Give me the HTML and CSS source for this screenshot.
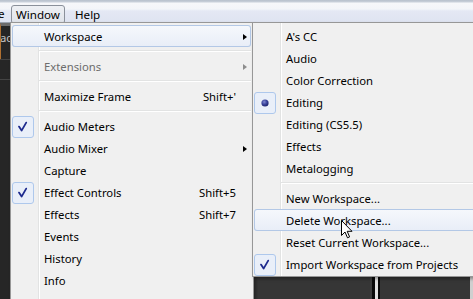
FILE: index.html
```html
<!DOCTYPE html>
<html>
<head>
<meta charset="utf-8">
<link rel="stylesheet" href="styles.css">
</head>
<body>
<div class="menubar">
  <span class="mb-item mb-cut">e</span>
  <span class="mb-item mb-open">Window</span>
  <span class="mb-item mb-help">Help</span>
</div>
<div class="workspace">
  <div class="strip">
    <div class="strip-tab"><span>ac</span></div>
    <div class="strip-row"></div>
    <div class="strip-row"></div>
  </div>
  <div class="panel panel-a"></div>
  <div class="divider"></div>
  <div class="panel panel-b"></div>
  <div class="edge"></div>
</div>

<div class="menu menu-main">
  <div class="item hl"><span class="ico"></span><span class="lbl">Workspace</span><span class="key"></span><span class="sub"><i class="arrow"></i></span></div>
  <div class="sep"></div>
  <div class="item dis"><span class="ico"></span><span class="lbl">Extensions</span><span class="key"></span><span class="sub"><i class="arrow"></i></span></div>
  <div class="sep"></div>
  <div class="item"><span class="ico"></span><span class="lbl">Maximize Frame</span><span class="key">Shift+'</span><span class="sub"></span></div>
  <div class="sep"></div>
  <div class="item"><span class="ico box"><svg viewBox="0 0 20 20" width="20" height="20"><path d="M6 9.6 L8.6 13.6 L13.2 5.6" fill="none" stroke="#1d2a8e" stroke-width="1.8" stroke-linejoin="round" stroke-linecap="round"/></svg></span><span class="lbl">Audio Meters</span><span class="key"></span><span class="sub"></span></div>
  <div class="item"><span class="ico"></span><span class="lbl">Audio Mixer</span><span class="key"></span><span class="sub"><i class="arrow"></i></span></div>
  <div class="item"><span class="ico"></span><span class="lbl">Capture</span><span class="key"></span><span class="sub"></span></div>
  <div class="item"><span class="ico box"><svg viewBox="0 0 20 20" width="20" height="20"><path d="M6 9.6 L8.6 13.6 L13.2 5.6" fill="none" stroke="#1d2a8e" stroke-width="1.8" stroke-linejoin="round" stroke-linecap="round"/></svg></span><span class="lbl">Effect Controls</span><span class="key">Shift+5</span><span class="sub"></span></div>
  <div class="item"><span class="ico"></span><span class="lbl">Effects</span><span class="key">Shift+7</span><span class="sub"></span></div>
  <div class="item"><span class="ico"></span><span class="lbl">Events</span><span class="key"></span><span class="sub"></span></div>
  <div class="item"><span class="ico"></span><span class="lbl">History</span><span class="key"></span><span class="sub"></span></div>
  <div class="item"><span class="ico"></span><span class="lbl">Info</span><span class="key"></span><span class="sub"></span></div>
  <div class="item"><span class="ico"></span><span class="lbl">Markers</span><span class="key"></span><span class="sub"></span></div>
</div>

<div class="menu menu-sub">
  <div class="item"><span class="ico"></span><span class="lbl">A's CC</span></div>
  <div class="item"><span class="ico"></span><span class="lbl">Audio</span></div>
  <div class="item"><span class="ico"></span><span class="lbl">Color Correction</span></div>
  <div class="item"><span class="ico box"><svg viewBox="0 0 20 20" width="20" height="20"><defs><radialGradient id="dot" cx="0.4" cy="0.35" r="0.7"><stop offset="0" stop-color="#8088d0"/><stop offset="0.5" stop-color="#3a449c"/><stop offset="1" stop-color="#1a1f66"/></radialGradient></defs><circle cx="10" cy="10" r="3.6" fill="url(#dot)"/></svg></span><span class="lbl">Editing</span></div>
  <div class="item"><span class="ico"></span><span class="lbl">Editing (CS5.5)</span></div>
  <div class="item"><span class="ico"></span><span class="lbl">Effects</span></div>
  <div class="item"><span class="ico"></span><span class="lbl">Metalogging</span></div>
  <div class="sep"></div>
  <div class="item"><span class="ico"></span><span class="lbl">New Workspace...</span></div>
  <div class="item hl"><span class="ico"></span><span class="lbl">Delete Workspace...</span>
    <svg class="cursor" width="12" height="19" viewBox="0 0 12 19"><path d="M0.5 0.5 L0.5 15.5 L4 12 L6.5 17.8 L8.6 16.9 L6.2 11.3 L11 11.3 Z" fill="#fff" stroke="#000" stroke-width="1" stroke-linejoin="miter"/></svg>
  </div>
  <div class="item"><span class="ico"></span><span class="lbl">Reset Current Workspace...</span></div>
  <div class="item"><span class="ico box"><svg viewBox="0 0 20 20" width="20" height="20"><path d="M6 9.6 L8.6 13.6 L13.2 5.6" fill="none" stroke="#1d2a8e" stroke-width="1.8" stroke-linejoin="round" stroke-linecap="round"/></svg></span><span class="lbl">Import Workspace from Projects</span></div>
</div>
</body>
</html>
```

FILE: styles.css
```css
* { box-sizing: border-box; }
html, body {
  margin: 0;
  padding: 0;
  width: 473px;
  height: 299px;
  overflow: hidden;
}
body {
  position: relative;
  font-family: "Segoe UI", "Noto Sans", "Open Sans", sans-serif;
  font-size: 11.3px;
  color: #000;
  background: #383838;
}

/* ---------- menu bar ---------- */
.menubar {
  height: 23px;
  display: flex;
  align-items: flex-start;
  background: linear-gradient(#b7c0cc 0, #c9d0da 2px, #f6f7fa 3px, #f3f5f9 9px, #e4e8f4 11px, #dfe4f1 22px);
  border-bottom: 1px solid #9aa2ae;
  white-space: nowrap;
  font-size: 11.6px;
}
.mb-item {
  height: 18px;
  margin-top: 5px;
  line-height: 17px;
  border: 1px solid transparent;
  border-radius: 3px;
}
.mb-cut {
  width: 11px;
  margin-left: -2px;
  border: 0;
}
.mb-open {
  width: 54px;
  margin-left: 2px;
  text-align: center;
  border-color: #8a909a;
  background: linear-gradient(#eef0f4, #dfe3ea);
  height: 19px;
}
.mb-help {
  margin-left: 4px;
  padding-left: 5px;
}

/* ---------- background app ---------- */
.workspace {
  display: flex;
  height: 276px;
}
.strip {
  width: 10px;
  background: #262626;
  display: flex;
  flex-direction: column;
}
.strip-tab {
  height: 36px;
  border-top: 3px solid #6c6c6c;
  border-left: 1px solid #b07030;
  overflow: hidden;
  color: #c4c4c4;
  line-height: 20px;
  padding-top: 2px;
  white-space: nowrap;
}
.strip-tab span { margin-left: -1px; }
.strip-row {
  height: 20px;
  border-top: 1px solid #444;
}
.panel-a {
  width: 360px;
  background: #363636;
}
.divider {
  width: 10px;
  background: linear-gradient(to right, #3c3c3c 0, #3c3c3c 2px, #0a0a0a 2px, #0a0a0a 5px, #e0e0e0 5px, #e0e0e0 8px, #0a0a0a 8px, #0a0a0a 10px);
}
.panel-b {
  width: 90px;
  background: #363636;
}
.edge {
  flex: 1;
  background: #cfcfcf;
}

/* ---------- menus ---------- */
.menu {
  position: absolute;
  top: 22px;
  border: 1px solid #979797;
  background-color: #f0f0f0;
  background-image: linear-gradient(to right, transparent 27px, #e2e3e3 27px, #e2e3e3 28px, #ffffff 28px, #ffffff 29px, transparent 29px);
  box-shadow: 2px 2px 3px rgba(0, 0, 0, 0.35);
  white-space: nowrap;
}
.menu-main {
  left: 10px;
  width: 244px;
  height: 300px;
  padding: 2px 2px 2px 1px;
}
.menu-sub {
  left: 252px;
  width: 240px;
  padding: 2px 1px 1px;
}
.item {
  height: 22px;
  display: grid;
  grid-template-columns: 22px 10px 1fr auto 15px;
  align-items: center;
  border-radius: 3px;
  position: relative;
}
.menu-sub .item { grid-template-columns: 22px 10px 1fr; }
.ico { grid-column: 1; height: 22px; }
.lbl { grid-column: 3; line-height: 22px; padding-top: 1px; }
.key { grid-column: 4; line-height: 22px; padding-top: 1px; }
.sub { grid-column: 5; height: 22px; display: flex; align-items: center; }
.arrow {
  display: block;
  margin-left: 7px;
  width: 0;
  height: 0;
  border-left: 4px solid #000;
  border-top: 3.5px solid transparent;
  border-bottom: 3.5px solid transparent;
}
.dis { color: #6d6d6d; }
.dis .arrow { border-left-color: #8d8d8d; }
.hl {
  background: linear-gradient(#f6f8fc, #e8edf7);
  box-shadow: inset 0 0 0 1px #b3c8e6;
}
.box {
  border: 1px solid #aec8ec;
  border-radius: 3px;
  background: #e9eff9;
  width: 22px;
  height: 22px;
}
.box svg { display: block; }
.sep {
  height: 8px;
  margin-left: 27px;
  background: linear-gradient(transparent 3px, #e2e3e3 3px, #e2e3e3 4px, #ffffff 4px, #ffffff 5px, transparent 5px);
}
.cursor {
  position: absolute;
  left: 87px;
  top: 11px;
  z-index: 2;
}
```
